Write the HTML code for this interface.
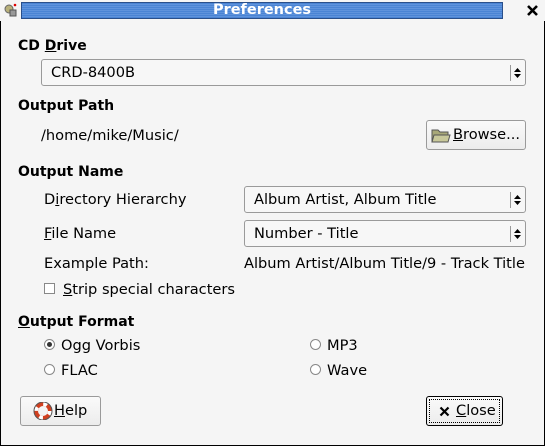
<!DOCTYPE html>
<html><head><style>
*{margin:0;padding:0;box-sizing:border-box}
body{width:545px;height:446px;background:#f5f5f5;font-family:"DejaVu Sans","Liberation Sans",sans-serif;font-size:14.6px;color:#000;position:relative;overflow:hidden}
.win{position:absolute;left:0;top:0;width:545px;height:446px;border:1px solid #000;border-top:none}
.a{position:absolute;white-space:nowrap;line-height:18px}
b{font-weight:bold;font-size:14px}
.title{position:absolute;left:21px;top:2px;width:482px;height:17px;background:repeating-linear-gradient(#4a84d4 0 1px,#5f93dc 1px 2px);border:1px solid #2a4f8a;color:#fff;font-weight:bold;font-size:14.5px;text-align:center;line-height:15px}
.combo{position:absolute;background:#f7f7f7;border:1px solid #9a9a9a;border-radius:3px;height:27px;padding-left:9px;line-height:26px}
.combo .sep{position:absolute;right:14px;top:5px;width:1px;height:16px;background:#999}
.combo .ar{position:absolute;right:4px;top:7px;width:7px;height:12px}
.btn{position:absolute;border:1px solid #9a9a9a;border-radius:3px;background:linear-gradient(#fafafa,#ececec);line-height:28px}
.rad{position:absolute;width:11px;height:11px;border:1px solid #888;border-radius:50%;background:#fff}
u{text-decoration:underline}
</style></head><body>
<div class="win"></div>
<div style="position:absolute;left:0;top:0;width:545px;height:21px;background:#f5f5f5"></div>
<svg style="position:absolute;left:3px;top:3px" width="14" height="14"><circle cx="6" cy="6" r="4" fill="#b8b07a" stroke="#666"/><rect x="7" y="7" width="6" height="6" fill="#999" stroke="#555"/><circle cx="12" cy="2" r="1.3" fill="#d00"/></svg>
<div class="title">Preferences</div>
<svg style="position:absolute;left:526px;top:4px" width="13" height="13"><path d="M2 2L11 11M11 2L2 11" stroke="#000" stroke-width="2.6"/></svg>

<div class="a" style="left:18px;top:37px"><b>CD <u>D</u>rive</b></div>
<div class="combo" style="left:41px;top:59px;width:485px">CRD-8400B<div class="sep"></div><svg class="ar" viewBox="0 0 7 12"><path d="M0 5L3.5 1L7 5ZM0 7L3.5 11L7 7Z" fill="#000"/></svg></div>

<div class="a" style="left:18px;top:97px"><b>Output Path</b></div>
<div class="a" style="left:41px;top:127px">/home/mike/Music/</div>
<div class="btn" style="left:426px;top:120px;width:100px;height:30px"><svg style="position:absolute;left:4px;top:7px" width="20" height="15"><path d="M1 2h6l2 2h8v10H1Z" fill="#a8a878" stroke="#555"/><path d="M3 7h16l-2 7H1Z" fill="#c8c89a" stroke="#555"/></svg><span style="position:absolute;left:26px;top:0"><u>B</u>rowse...</span></div>

<div class="a" style="left:18px;top:163px"><b>Output Name</b></div>
<div class="a" style="left:44px;top:191px">D<u>i</u>rectory Hierarchy</div>
<div class="combo" style="left:244px;top:186px;width:282px">Album Artist, Album Title<div class="sep"></div><svg class="ar" viewBox="0 0 7 12"><path d="M0 5L3.5 1L7 5ZM0 7L3.5 11L7 7Z" fill="#000"/></svg></div>
<div class="a" style="left:44px;top:225px"><u>F</u>ile Name</div>
<div class="combo" style="left:244px;top:220px;width:282px">Number - Title<div class="sep"></div><svg class="ar" viewBox="0 0 7 12"><path d="M0 5L3.5 1L7 5ZM0 7L3.5 11L7 7Z" fill="#000"/></svg></div>
<div class="a" style="left:44px;top:255px">Example Path:</div>
<div class="a" style="left:244px;top:255px">Album Artist/Album Title/9 - Track Title</div>
<div style="position:absolute;left:44px;top:283px;width:11px;height:11px;border:1px solid #888;background:#fff"></div>
<div class="a" style="left:63px;top:281px"><u>S</u>trip special characters</div>

<div class="a" style="left:18px;top:313px"><b><u>O</u>utput Format</b></div>
<div class="rad" style="left:44px;top:339px"><div style="position:absolute;left:2px;top:2px;width:5px;height:5px;border-radius:50%;background:#333"></div></div>
<div class="a" style="left:61px;top:337px">Ogg Vorbis</div>
<div class="rad" style="left:310px;top:339px"></div>
<div class="a" style="left:327px;top:337px">MP3</div>
<div class="rad" style="left:44px;top:364px"></div>
<div class="a" style="left:61px;top:362px">FLAC</div>
<div class="rad" style="left:310px;top:364px"></div>
<div class="a" style="left:327px;top:362px">Wave</div>

<div class="btn" style="left:20px;top:396px;width:81px;height:30px"><svg style="position:absolute;left:12px;top:5px" width="20" height="18"><circle cx="10" cy="9" r="7" fill="none" stroke="#d04020" stroke-width="4"/><circle cx="10" cy="9" r="7" fill="none" stroke="#fff" stroke-width="4" stroke-dasharray="4 7"/><circle cx="10" cy="9" r="9" fill="none" stroke="#555" stroke-width="1"/></svg><span style="position:absolute;left:33px;top:0"><u>H</u>elp</span></div>
<div class="btn" style="left:426px;top:396px;width:77px;height:30px;border:1px solid #000"><div style="position:absolute;left:2px;top:2px;right:2px;bottom:2px;border:1px dotted #000"></div><svg style="position:absolute;left:12px;top:9px" width="11" height="11"><path d="M1.5 1.5L9.5 9.5M9.5 1.5L1.5 9.5" stroke="#000" stroke-width="2.2"/></svg><span style="position:absolute;left:29px;top:0"><u>C</u>lose</span></div>
</body></html>
